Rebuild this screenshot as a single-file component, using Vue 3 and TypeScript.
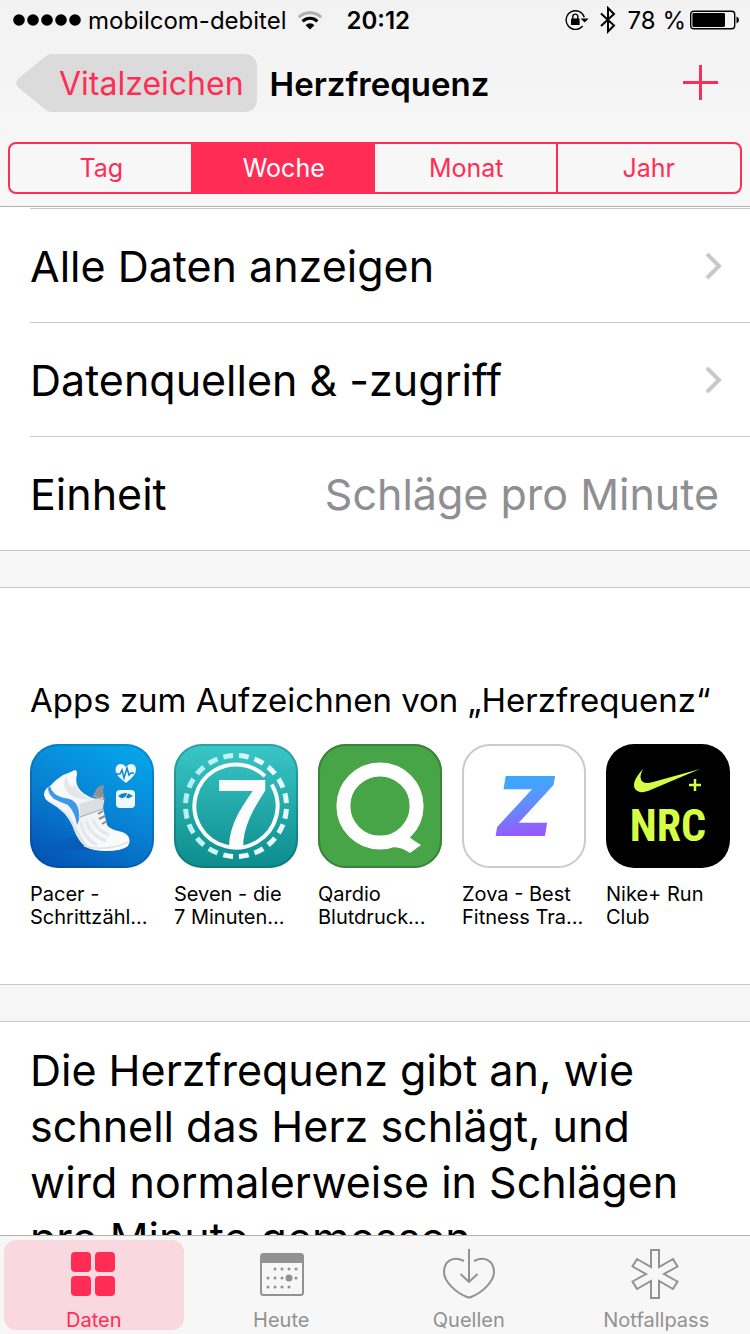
<script setup lang="ts">
import { ref } from 'vue'

interface AppEntry {
  id: string
  name: string
}

const ranges: string[] = ['Tag', 'Woche', 'Monat', 'Jahr']
const activeRange = ref('Woche')

const links: string[] = ['Alle Daten anzeigen', 'Datenquellen & -zugriff']

const apps: AppEntry[] = [
  { id: 'pacer', name: 'Pacer -\nSchrittzähl...' },
  { id: 'seven', name: 'Seven - die\n7 Minuten...' },
  { id: 'qardio', name: 'Qardio\nBlutdruck...' },
  { id: 'zova', name: 'Zova - Best\nFitness Tra...' },
  { id: 'nike', name: 'Nike+ Run\nClub' },
]

const tabs: string[] = ['Daten', 'Heute', 'Quellen', 'Notfallpass']
const activeTab = ref('Daten')

const calendarDots: [number, number][] = [
  [21, 21], [28, 21], [35, 21], [42, 21],
  [14, 30], [21, 30], [28, 30], [42, 30],
  [14, 39], [21, 39], [28, 39], [35, 39],
]
</script>

<template>
  <div class="screen">
    <header class="top">
      <div class="status">
        <svg class="signal" width="70" height="14" viewBox="0 0 70 14" aria-hidden="true">
          <circle v-for="n in 5" :key="n" :cx="n * 14 - 7" cy="7" r="5.8" />
        </svg>
        <span class="carrier">mobilcom-debitel</span>
        <svg class="wifi" width="26" height="20" viewBox="0 0 26 20" aria-hidden="true">
          <g fill="none" stroke="#000" stroke-width="3">
            <path d="M1.8 7.2A16 16 0 0 1 24.2 7.2" stroke="#b0b0b0" />
            <path d="M5.6 11.4A10.5 10.5 0 0 1 20.4 11.4" />
          </g>
          <path d="M13 19.4L8.6 15.2A6.2 6.2 0 0 1 17.4 15.2Z" />
        </svg>
        <time class="clock">20:12</time>
        <div class="indicators">
          <svg width="24" height="22" viewBox="0 0 24 22" aria-hidden="true">
            <path d="M19.3 8.2A9.3 9.3 0 1 0 17.6 17" fill="none" stroke="#000" stroke-width="1.4" />
            <path d="M15.6 9.6H23.6L19.6 13.6Z" />
            <rect x="6" y="9.4" width="8.6" height="6.6" rx=".6" />
            <path d="M7.8 10V7.6A2.5 2.5 0 0 1 12.8 7.6V10" fill="none" stroke="#000" stroke-width="1.4" />
          </svg>
          <svg width="16" height="28" viewBox="0 0 16 28" aria-hidden="true">
            <path d="M1 7.5L14 19.5L8 25.5V2L14 8L1 20" fill="none" stroke="#000" stroke-width="2" />
          </svg>
          <span class="percent">78 %</span>
          <svg width="50" height="20" viewBox="0 0 50 20" aria-hidden="true">
            <rect x=".7" y="1.2" width="44" height="17.6" rx="3" fill="none" stroke="#000" stroke-width="1.4" />
            <rect x="2.4" y="3" width="32.6" height="14" rx="1.4" />
            <path d="M46.5 6.6Q49 7.5 49 10Q49 12.5 46.5 13.4Z" />
          </svg>
        </div>
      </div>

      <div class="navbar">
        <button class="back" type="button">
          <svg width="36" height="58" viewBox="0 0 36 58" aria-hidden="true">
            <path d="M36 0C33 0 31 1.4 29 2.8L3 24Q-2.6 29 3 34L29 55.2C31 56.6 33 58 36 58Z" fill="#dbdbdb" />
          </svg>
          <span class="back-label">Vitalzeichen</span>
        </button>
        <h1 class="title">Herzfrequenz</h1>
        <button class="add" type="button" aria-label="Daten hinzufügen">
          <svg width="36" height="36" viewBox="0 0 36 36" aria-hidden="true">
            <path d="M17.5 0V35M0 17.5H35" fill="none" stroke="#ff2d55" stroke-width="3" />
          </svg>
        </button>
      </div>

      <div class="segments" role="group" aria-label="Zeitraum">
        <button
          v-for="range in ranges"
          :key="range"
          type="button"
          class="segment"
          :class="{ selected: range === activeRange }"
          :aria-pressed="range === activeRange"
          @click="activeRange = range"
        >
          {{ range }}
        </button>
      </div>
    </header>

    <main class="content">
      <section class="list">
        <a v-for="link in links" :key="link" class="row" href="#">
          <span>{{ link }}</span>
          <svg width="18" height="28" viewBox="0 0 18 28" aria-hidden="true">
            <path d="M3 2L15 14L3 26" fill="none" stroke="#c7c7cc" stroke-width="4" />
          </svg>
        </a>
        <a class="row" href="#">
          <span>Einheit</span>
          <span class="value">Schläge pro Minute</span>
        </a>
      </section>

      <section class="apps">
        <h2 class="apps-title">Apps zum Aufzeichnen von „Herzfrequenz“</h2>
        <div class="app-list">
          <a v-for="app in apps" :key="app.id" class="app" href="#">
            <svg v-if="app.id === 'pacer'" class="app-icon" viewBox="0 0 124 124" aria-hidden="true">
              <defs>
                <linearGradient id="pacer-bg" x1=".8" y1="0" x2=".3" y2="1">
                  <stop offset="0" stop-color="#06a5ea" />
                  <stop offset=".55" stop-color="#0880d2" />
                  <stop offset="1" stop-color="#0556b6" />
                </linearGradient>
                <linearGradient id="pacer-shoe" x1="0" y1="0" x2="1" y2="1">
                  <stop offset="0" stop-color="#ffffff" />
                  <stop offset=".5" stop-color="#f1f2f4" />
                  <stop offset="1" stop-color="#ffffff" />
                </linearGradient>
                <linearGradient id="pacer-shade" x1="0" y1="0" x2="1" y2="0">
                  <stop offset="0" stop-color="#0349a5" stop-opacity="0" />
                  <stop offset="1" stop-color="#0349a5" stop-opacity=".5" />
                </linearGradient>
              </defs>
              <rect width="124" height="124" rx="28" fill="url(#pacer-bg)" />
              <path d="M14 102L46 92L62 106H22Z" fill="url(#pacer-shade)" />
              <path d="M63 51L67 44Q70 41 74 41L73 47L75 56L72 62Z" fill="#8b9299" />
              <path
                d="M45 26Q39 29 33 31Q25 36 20 42Q14 45 14 51Q15 56 19 58Q28 63 34 69Q41 77 44 86Q48 97 56 103Q63 107 76 107Q92 107 98 102Q101 96 98 92Q95 88 88 87Q80 85 77 81L73 64L74 56L62 54Q51 49 48 43Q45 37 47 30Q47 26 45 26Z"
                fill="url(#pacer-shoe)"
              />
              <path d="M36 31Q31 42 39 50Q46 56 61 55Q50 51 45 42Q38 44 36 31Z" fill="#e4e6e9" />
              <path d="M15 54Q28 62 35 69Q42 77 45 87Q50 101 60 105Q50 92 45 81Q38 66 15 54Z" fill="#dfe3e6" />
              <path d="M20 42Q22 51 34 54Q48 55 49 69Q50 76 47 81Q45 68 38 61Q30 58 24 55Q18 50 18 44Z" fill="#3d98ec" />
              <path d="M51 78Q53 94 67 101M56 77Q60 91 76 97M63 75Q65 85 79 91" fill="none" stroke="#e5e8ea" stroke-width="3" />
              <path d="M54 102Q77 108 98 98" fill="none" stroke="#dfe2e5" stroke-width="1.5" />
              <path d="M49 60L73 53V65L50 73Q51 66 49 60Z" fill="#dcdfe1" />
              <path d="M50 73L73 65M62 53L66 52L72 56" fill="none" stroke="#a4abb0" stroke-width="1" />
              <path d="M68 70L73 67M69 75L75 72M72 80L77 77" fill="none" stroke="#848d94" stroke-width="2" />
              <path d="M96 39Q85 31 85.5 25.5Q86 20 91 20Q94 20 96 23Q98 20 101 20Q106 20 106 26Q106 31 96 39Z" fill="#eef8ff" />
              <path d="M86 30H90L92 26L94 34L97 24L99 31L101 29H104" fill="none" stroke="#1186cf" stroke-width="1.5" />
              <rect x="86" y="46" width="19" height="18" rx="4" fill="#eef8ff" />
              <path d="M88 52Q95 46 103 52L98 54.5Q95 52 92 54.5Z" fill="#1481cb" />
              <path d="M95 54L98 49" stroke="#eef8ff" stroke-width="1" />
              <rect x="1" y="1" width="122" height="122" rx="27" fill="none" stroke="#003c78" stroke-opacity=".25" stroke-width="2" />
            </svg>

            <svg v-else-if="app.id === 'seven'" class="app-icon" viewBox="0 0 124 124" aria-hidden="true">
              <defs>
                <linearGradient id="seven-bg" x1="0" y1="0" x2="0" y2="1">
                  <stop offset="0" stop-color="#3ac6c8" />
                  <stop offset="1" stop-color="#0d8c8c" />
                </linearGradient>
                <linearGradient id="seven-ring" x1="0" y1="0" x2="1" y2=".3">
                  <stop offset="0" stop-color="#aeeff0" />
                  <stop offset=".45" stop-color="#c5f4f5" />
                  <stop offset=".7" stop-color="#f0fdfd" />
                  <stop offset="1" stop-color="#e4fafa" />
                </linearGradient>
              </defs>
              <rect width="124" height="124" rx="28" fill="url(#seven-bg)" />
              <circle
                cx="62" cy="62" r="50.5" fill="none" stroke="url(#seven-ring)" stroke-width="5"
                pathLength="200" stroke-dasharray="6.2 3.8" stroke-dashoffset="-1.9"
              />
              <circle
                cx="62" cy="62" r="41.6" fill="none" stroke="#fbfdfc" stroke-width="4"
                pathLength="360" stroke-dasharray="345 15" transform="rotate(-31 62 62)"
              />
              <text x="41" y="104" class="mark-seven">7</text>
              <rect x="1" y="1" width="122" height="122" rx="27" fill="none" stroke="#005050" stroke-opacity=".28" stroke-width="2" />
            </svg>

            <svg v-else-if="app.id === 'qardio'" class="app-icon" viewBox="0 0 124 124" aria-hidden="true">
              <rect width="124" height="124" rx="28" fill="#48a547" />
              <circle cx="62" cy="62" r="36.6" fill="none" stroke="#fff" stroke-width="14" />
              <path d="M90 92Q96 97 103 101L92 109Q83 102 71 103L66 98Z" fill="#fff" />
              <rect x="1" y="1" width="122" height="122" rx="27" fill="none" stroke="#3a843a" stroke-width="2" />
            </svg>

            <svg v-else-if="app.id === 'zova'" class="app-icon" viewBox="0 0 124 124" aria-hidden="true">
              <defs>
                <linearGradient id="zova-mark" gradientUnits="userSpaceOnUse" x1="56" y1="32" x2="68" y2="92">
                  <stop offset="0" stop-color="#37aaff" />
                  <stop offset=".35" stop-color="#5499ff" />
                  <stop offset="1" stop-color="#9b55ff" />
                </linearGradient>
              </defs>
              <rect x="1" y="1" width="122" height="122" rx="27" fill="#fff" stroke="#cbcbcb" stroke-width="2" />
              <text x="62" y="92" text-anchor="middle" class="mark-zova" fill="url(#zova-mark)">Z</text>
            </svg>

            <svg v-else class="app-icon" viewBox="0 0 124 124" aria-hidden="true">
              <rect width="124" height="124" rx="28" fill="#000" />
              <path d="M94 25L42 47Q33 50 29 45Q25 38 37 25Q32 35 37 38Q40 40 47 38Z" fill="#d4ff45" />
              <path d="M89 35V47M83 41H95" fill="none" stroke="#d4ff45" stroke-width="2.5" />
              <text x="62" y="97" text-anchor="middle" class="mark-nrc">NRC</text>
            </svg>
            <span class="app-name">{{ app.name }}</span>
          </a>
        </div>
      </section>

      <section class="about">
        <p>Die Herzfrequenz gibt an, wie schnell das Herz schlägt, und wird normalerweise in Schlägen pro Minute gemessen.</p>
      </section>
    </main>

    <nav class="tabs" aria-label="Bereiche">
      <button
        v-for="tab in tabs"
        :key="tab"
        type="button"
        class="tab"
        :class="{ current: tab === activeTab }"
        @click="activeTab = tab"
      >
        <svg width="56" height="52" viewBox="0 0 56 52" aria-hidden="true">
          <g v-if="tab === 'Daten'" fill="currentColor">
            <rect x="5" y="4" width="20" height="20" rx="4" />
            <rect x="29" y="4" width="20" height="20" rx="4" />
            <rect x="5" y="28" width="20" height="20" rx="4" />
            <rect x="29" y="28" width="20" height="20" rx="4" />
          </g>
          <g v-else-if="tab === 'Heute'" fill="currentColor">
            <rect x="8" y="6" width="42" height="41" rx="2.5" fill="none" stroke="currentColor" stroke-width="2" />
            <rect x="8" y="6" width="42" height="9" />
            <circle v-for="[x, y] in calendarDots" :key="`${x}-${y}`" :cx="x + 1" :cy="y" r="1.5" />
            <circle cx="36" cy="30" r="3.5" />
          </g>
          <g v-else-if="tab === 'Quellen'" fill="none" stroke="currentColor" stroke-width="2">
            <path d="M28 1V34M19.5 26L28 34L36.5 26" />
            <path d="M23 13C12 7.5 3 13 3 24C3 33 14 44.5 26 49Q28 50 30 49C42 44.5 53 33 53 24C53 13 44 7.5 33 13" />
          </g>
          <path
            v-else
            d="M23 2H31V19L45 11L49.5 18.5L36 26L49.5 33.5L45 41L31 33V50H23V33L9 41L4.5 33.5L18 26L4.5 18.5L9 11L23 19Z"
            fill="none" stroke="currentColor" stroke-width="2"
          />
        </svg>
        <span>{{ tab }}</span>
      </button>
    </nav>
  </div>
</template>

<style>
body {
  margin: 0;
}
</style>

<style scoped>
.screen {
  box-sizing: border-box;
  display: flex;
  flex-direction: column;
  height: 100vh;
  overflow: hidden;
  background: #f6f6f6;
  color: #000;
  font-family: Inter, "Liberation Sans", sans-serif;
}

button {
  margin: 0;
  padding: 0;
  border: 0;
  background: none;
  color: inherit;
  font: inherit;
  cursor: pointer;
}

a {
  color: inherit;
  text-decoration: none;
}

svg {
  display: block;
  flex: none;
}

.top {
  flex: none;
  padding-bottom: 12px;
  border-bottom: 1px solid #b2b2b2;
  background: linear-gradient(#f2f2f2, #f8f8f8);
}

.status {
  display: flex;
  align-items: center;
  height: 40px;
  padding: 0 10px 0 12px;
  font-size: 24px;
}

.carrier {
  margin-left: 6px;
}

.wifi {
  margin-left: 10px;
}

.clock {
  margin-left: 24px;
  font-weight: 600;
}

.indicators {
  display: flex;
  flex: 1;
  align-items: center;
  justify-content: flex-end;
}

.indicators svg:nth-child(2) {
  margin-left: 11px;
}

.percent {
  margin: 0 4px 0 12px;
}

.navbar {
  display: flex;
  align-items: center;
  height: 86px;
  padding: 0 31px 0 16px;
}

.back {
  display: flex;
  align-items: center;
  color: #ff2d55;
  font-size: 32px;
}

.back-label {
  height: 58px;
  padding: 0 13px 0 7px;
  border-radius: 0 12px 12px 0;
  background: #dbdbdb;
  line-height: 60px;
}

.title {
  flex: 1;
  margin: 0 0 0 13px;
  font-size: 33px;
  font-weight: 600;
  line-height: 58px;
  padding-top: 2px;
}

.segments {
  display: grid;
  grid-template-columns: repeat(4, 1fr);
  margin: 16px 8px 0;
  overflow: hidden;
  border: 2px solid #ff2d55;
  border-radius: 8px;
}

.segment {
  height: 48px;
  color: #ff2d55;
  font-size: 25px;
}

.segment + .segment {
  margin-left: -2px;
  border-left: 2px solid #ff2d55;
}

.segment.selected {
  background: #ff2d55;
  color: #fff;
}

.content {
  flex: 1;
  min-height: 0;
  overflow: hidden;
}

.list {
  padding: 1px 0 0 30px;
  border-bottom: 1px solid #c8c7cc;
  background: #fff;
}

.row {
  display: flex;
  align-items: center;
  justify-content: space-between;
  box-sizing: border-box;
  height: 114px;
  padding-right: 28px;
  border-top: 1px solid #c8c7cc;
  font-size: 43px;
}

.value {
  margin-right: 3px;
  color: #8e8e93;
}

.apps {
  margin-top: 36px;
  padding: 90px 20px 55px 30px;
  border-top: 1px solid #c8c7cc;
  border-bottom: 1px solid #c8c7cc;
  background: #fff;
}

.apps-title {
  margin: 0 0 22px;
  font-size: 33px;
  font-weight: 400;
  line-height: 44px;
  white-space: nowrap;
}

.app-list {
  display: flex;
  gap: 20px;
}

.app {
  width: 124px;
}

.app-icon {
  width: 124px;
  height: 124px;
}

.app-name {
  display: block;
  margin-top: 15px;
  font-size: 20px;
  line-height: 23px;
  white-space: pre;
}

.mark-seven {
  fill: #fbfdfc;
  font: 700 98px "Liberation Sans", sans-serif;
}

.mark-zova {
  font: italic 900 83px Inter, sans-serif;
}

.mark-nrc {
  fill: #d4ff45;
  font: 700 44px "Roboto Condensed", "Liberation Sans Narrow", "Open Sans Condensed", sans-serif;
}

.about {
  margin-top: 36px;
  padding: 20px 30px;
  border-top: 1px solid #c8c7cc;
  background: #fff;
}

.about p {
  margin: 0;
  font-size: 43px;
  line-height: 56px;
}

.tabs {
  display: grid;
  flex: none;
  grid-template-columns: repeat(4, 1fr);
  border-top: 1px solid #b2b2b2;
  background: #f7f7f7;
}

.tab {
  display: flex;
  flex-direction: column;
  align-items: center;
  height: 90px;
  margin: 4px;
  padding-top: 8px;
  border-radius: 12px;
  color: #929292;
  font-size: 20px;
  line-height: 24px;
}

.tab span {
  margin-top: 8px;
}

.tab.current {
  background: #f9d9df;
  color: #ff2d55;
}
</style>
